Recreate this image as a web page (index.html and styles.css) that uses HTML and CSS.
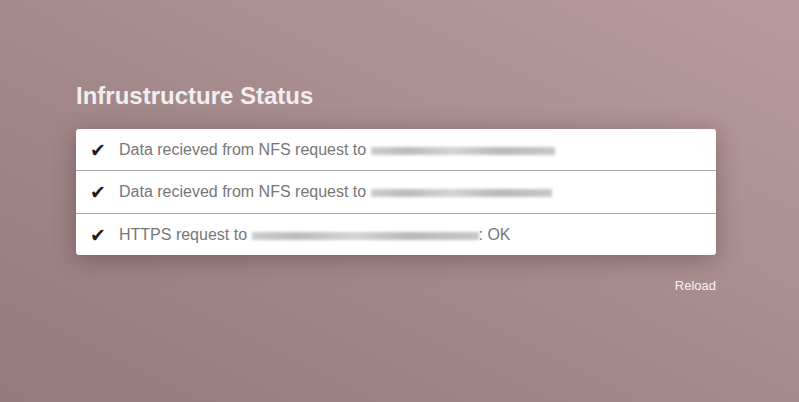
FILE: index.html
```html
<!DOCTYPE html>
<html>
<head>
<meta charset="utf-8">
<link rel="stylesheet" href="styles.css">
</head>
<body>
<main class="page">
  <h1 class="title">Infrustructure Status</h1>
  <ul class="card">
    <li class="row"><span class="check">✔</span><span class="msg">Data recieved from NFS request to <span class="redact r1"></span></span></li>
    <li class="row row-mid"><span class="check">✔</span><span class="msg">Data recieved from NFS request to <span class="redact r2"></span></span></li>
    <li class="row"><span class="check">✔</span><span class="msg">HTTPS request to <span class="redact r3"></span>: OK</span></li>
  </ul>
  <div class="actions"><a class="reload" href="#">Reload</a></div>
</main>
</body>
</html>
```
FILE: styles.css
```css
html, body {
  margin: 0;
  height: 100%;
}
body {
  background: linear-gradient(to top right, #957a7b 0%, #a58a8c 50%, #b99b9d 100%);
  font-family: "Liberation Sans", Arial, sans-serif;
  overflow: hidden;
}
.page {
  width: 640px;
  margin-left: 76px;
  padding-top: 82px;
}
.title {
  margin: 0 0 19px 0;
  font-size: 24px;
  line-height: 28px;
  font-weight: bold;
  color: #f1eeef;
}
.card {
  list-style: none;
  margin: 0;
  padding: 0;
  background: #fff;
  border-radius: 3px;
  box-shadow: 0 4px 22px rgba(60, 30, 35, 0.35);
}
.row {
  display: flex;
  align-items: center;
  height: 41px;
  padding-left: 14px;
  border-top: 1px solid #aaa;
}
.row:first-child {
  border-top: none;
}
.row-mid {
  height: 42px;
}
.check {
  width: 29px;
  font-family: "DejaVu Sans", sans-serif;
  font-size: 19px;
  color: #1e1e1e;
}
.msg {
  font-size: 16px;
  color: #777;
  display: flex;
  align-items: center;
  white-space: pre;
}
.redact {
  display: inline-block;
  height: 8px;
  margin-top: 2px;
  background: linear-gradient(to right, #ccc, #bbb 20%, #d4d4d4 45%, #b8b8b8 70%, #c8c8c8);
  filter: blur(1.5px);
}
.r1 { width: 184px; }
.r2 { width: 181px; }
.r3 { width: 227px; }
.actions {
  display: flex;
  justify-content: flex-end;
  margin-top: 23px;
}
.reload {
  font-size: 13px;
  color: #f6f2f2;
  text-decoration: none;
}
```
